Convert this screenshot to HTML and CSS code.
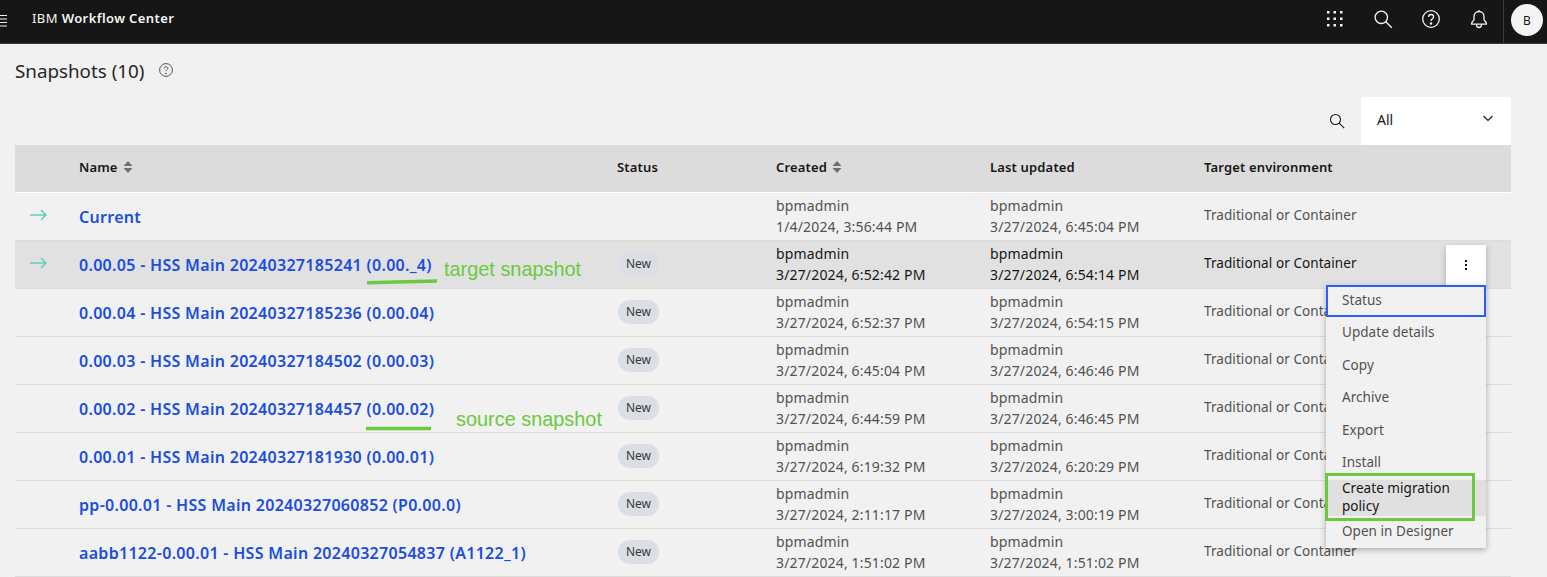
FILE: index.html
```html
<!DOCTYPE html>
<html lang="en">
<head>
<meta charset="utf-8">
<title>IBM Workflow Center</title>
<link rel="stylesheet" href="styles.css">
</head>
<body>
<header class="topbar">
  <svg class="burger" width="8" height="12" viewBox="0 0 8 12"><path d="M0 .5h7M0 4h7M0 7.500h7M0 11h7" stroke="#f4f4f4" fill="none"/></svg>
  <div class="brand">IBM <b>Workflow Center</b></div>
  <div class="top-icons">
    <svg class="ti" width="20" height="20" viewBox="0 0 20 20" fill="#f4f4f4"><rect x="2" y="2" width="2.500" height="2.500"/><rect x="8.500" y="2" width="2.500" height="2.500"/><rect x="15" y="2" width="2.500" height="2.500"/><rect x="2" y="8.500" width="2.500" height="2.500"/><rect x="8.500" y="8.500" width="2.500" height="2.500"/><rect x="15" y="8.500" width="2.500" height="2.500"/><rect x="2" y="15" width="2.500" height="2.500"/><rect x="8.500" y="15" width="2.500" height="2.500"/><rect x="15" y="15" width="2.500" height="2.500"/></svg>
    <svg class="ti" width="20" height="20" viewBox="0 0 20 20" fill="none" stroke="#f4f4f4" stroke-width="1.300"><circle cx="8.300" cy="8.300" r="6.200"/><path d="M12.800 12.800l6 6"/></svg>
    <svg class="ti" width="20" height="20" viewBox="0 0 20 20" fill="none" stroke="#f4f4f4" stroke-width="1.300"><circle cx="10" cy="10" r="8.300"/><path d="M7.500 8c0-1.500 1-2.500 2.500-2.500s2.600 1 2.600 2.300c0 1.200-.8 1.800-1.500 2.300-.7.400-1.100.9-1.100 1.900"/><circle cx="10" cy="14.500" r=".6" fill="#f4f4f4"/></svg>
    <svg class="ti" width="20" height="20" viewBox="0 0 20 20" fill="none" stroke="#f4f4f4" stroke-width="1.300"><path d="M10 2.500c-3 0-5 2.200-5 5v3.300l-2.300 3v1.300h14.600v-1.300l-2.300-3V7.500c0-2.800-2-5-5-5zM10 1v1.500M7.500 15.500c0 1.800 1 3 2.500 3s2.500-1.200 2.500-3"/></svg>
  </div>
  <div class="user"><span class="avatar">B</span></div>
</header>

<main class="page">
  <div class="title-row">
    <h1 class="title">Snapshots (10)</h1>
    <svg class="help" width="16" height="16" viewBox="0 0 16 16" fill="none" stroke="#525252"><circle cx="8" cy="8" r="6.400"/><path d="M6.100 6.500c0-1.100.8-1.800 1.900-1.800s1.900.7 1.900 1.600c0 .9-.6 1.300-1.100 1.700-.5.300-.8.600-.8 1.300"/><circle cx="8" cy="11.300" r=".4" fill="#525252"/></svg>
  </div>

  <div class="toolbar">
    <svg class="tool-search" width="16" height="16" viewBox="0 0 16 16" fill="none" stroke="#161616" stroke-width="1.100"><circle cx="6.500" cy="6.500" r="5"/><path d="M10.200 10.200l5 5"/></svg>
    <div class="select"><span class="select-label">All</span>
      <svg width="10" height="7" viewBox="0 0 10 7" fill="none" stroke="#161616" stroke-width="1.100"><path d="M.5 1l4.500 4.500L9.500 1"/></svg>
    </div>
  </div>

  <div class="table">
    <div class="row head">
      <div></div>
      <div class="th">Name <svg class="sort" width="10" height="14" viewBox="0 0 10 14" fill="#6f6f6f"><path d="M5 1l4.500 5h-9zM5 13L.5 8h9z"/></svg></div>
      <div class="th">Status</div>
      <div class="th">Created <svg class="sort" width="10" height="14" viewBox="0 0 10 14" fill="#6f6f6f"><path d="M5 1l4.500 5h-9zM5 13L.5 8h9z"/></svg></div>
      <div class="th">Last updated</div>
      <div class="th">Target environment</div>
    </div>

    <div class="row">
      <div class="arrow"><svg width="17" height="12" viewBox="0 0 17 12" fill="none" stroke="#5fd0b8" stroke-width="1.500"><path d="M0 6h16M11 1l5 5-5 5"/></svg></div>
      <a class="name">Current</a>
      <div></div>
      <div class="stamp">bpmadmin<br>1/4/2024, 3:56:44 PM</div>
      <div class="stamp">bpmadmin<br>3/27/2024, 6:45:04 PM</div>
      <div class="env">Traditional or Container</div>
    </div>

    <div class="row hover">
      <div class="arrow"><svg width="17" height="12" viewBox="0 0 17 12" fill="none" stroke="#5fd0b8" stroke-width="1.500"><path d="M0 6h16M11 1l5 5-5 5"/></svg></div>
      <a class="name">0.00.05 - HSS Main 20240327185241 (0.00._4)</a>
      <div class="tag-cell"><span class="tag">New</span></div>
      <div class="stamp">bpmadmin<br>3/27/2024, 6:52:42 PM</div>
      <div class="stamp">bpmadmin<br>3/27/2024, 6:54:14 PM</div>
      <div class="env">Traditional or Container</div>
    </div>

    <div class="row">
      <div></div>
      <a class="name">0.00.04 - HSS Main 20240327185236 (0.00.04)</a>
      <div class="tag-cell"><span class="tag">New</span></div>
      <div class="stamp">bpmadmin<br>3/27/2024, 6:52:37 PM</div>
      <div class="stamp">bpmadmin<br>3/27/2024, 6:54:15 PM</div>
      <div class="env">Traditional or Container</div>
    </div>

    <div class="row">
      <div></div>
      <a class="name">0.00.03 - HSS Main 20240327184502 (0.00.03)</a>
      <div class="tag-cell"><span class="tag">New</span></div>
      <div class="stamp">bpmadmin<br>3/27/2024, 6:45:04 PM</div>
      <div class="stamp">bpmadmin<br>3/27/2024, 6:46:46 PM</div>
      <div class="env">Traditional or Container</div>
    </div>

    <div class="row">
      <div></div>
      <a class="name">0.00.02 - HSS Main 20240327184457 (0.00.02)</a>
      <div class="tag-cell"><span class="tag">New</span></div>
      <div class="stamp">bpmadmin<br>3/27/2024, 6:44:59 PM</div>
      <div class="stamp">bpmadmin<br>3/27/2024, 6:46:45 PM</div>
      <div class="env">Traditional or Container</div>
    </div>

    <div class="row">
      <div></div>
      <a class="name">0.00.01 - HSS Main 20240327181930 (0.00.01)</a>
      <div class="tag-cell"><span class="tag">New</span></div>
      <div class="stamp">bpmadmin<br>3/27/2024, 6:19:32 PM</div>
      <div class="stamp">bpmadmin<br>3/27/2024, 6:20:29 PM</div>
      <div class="env">Traditional or Container</div>
    </div>

    <div class="row">
      <div></div>
      <a class="name">pp-0.00.01 - HSS Main 20240327060852 (P0.00.0)</a>
      <div class="tag-cell"><span class="tag">New</span></div>
      <div class="stamp">bpmadmin<br>3/27/2024, 2:11:17 PM</div>
      <div class="stamp">bpmadmin<br>3/27/2024, 3:00:19 PM</div>
      <div class="env">Traditional or Container</div>
    </div>

    <div class="row">
      <div></div>
      <a class="name">aabb1122-0.00.01 - HSS Main 20240327054837 (A1122_1)</a>
      <div class="tag-cell"><span class="tag">New</span></div>
      <div class="stamp">bpmadmin<br>3/27/2024, 1:51:02 PM</div>
      <div class="stamp">bpmadmin<br>3/27/2024, 1:51:02 PM</div>
      <div class="env">Traditional or Container</div>
    </div>
  </div>
</main>

<div class="kebab"><svg width="4" height="12" viewBox="0 0 4 12" fill="#161616"><rect x="1" y="1" width="2" height="2"/><rect x="1" y="5" width="2" height="2"/><rect x="1" y="9" width="2" height="2"/></svg></div>
<ul class="menu">
  <li class="focus">Status</li>
  <li>Update details</li>
  <li>Copy</li>
  <li>Archive</li>
  <li>Export</li>
  <li>Install</li>
  <li class="active">Create migration policy</li>
  <li class="last">Open in Designer</li>
</ul>
<div class="green-box"></div>

<span class="note note-target">target snapshot</span>
<span class="note note-source">source snapshot</span>
<svg class="mark mark-target" width="72" height="7" viewBox="0 0 72 7"><path d="M1 4.700L71 3" stroke="#6cc93f" stroke-width="3.500" fill="none"/></svg>
<svg class="mark mark-source" width="66" height="7" viewBox="0 0 66 7"><path d="M0 3.500H65" stroke="#6cc93f" stroke-width="3.500" fill="none"/></svg>
</body>
</html>
```

FILE: styles.css
```css
* { box-sizing: border-box; }
html, body { margin: 0; height: 577px; overflow: hidden; }
body { background: #f1f1f1; font-family: "Noto Sans", "Liberation Sans", sans-serif; color: #161616; position: relative; }

.topbar { height: 44px; background: #161616; border-bottom: 1px solid #393939; display: flex; align-items: center; color: #f4f4f4; }
.burger { margin-top: -2px; flex: none; }
.brand { margin-left: 24px; font-size: 13px; letter-spacing: .4px; margin-top: -7px; }
.brand b { font-weight: 600; }
.top-icons { margin-left: auto; display: flex; gap: 28px; margin-top: -5px; }
.user { width: 44px; height: 43px; margin-left: 14px; border-left: 1px solid #393939; display: flex; align-items: center; justify-content: center; padding-left: 3px; }
.avatar { width: 32px; height: 32px; border-radius: 50%; background: #f4f4f4; color: #161616; font-size: 12px; display: flex; align-items: center; justify-content: center; margin-top: -3px; }

.page { padding: 0 36px 0 15px; }
.title-row { display: flex; align-items: center; gap: 14px; height: 53px; }
.title { margin: 0; font-size: 18.800px; font-weight: 400; color: #262626; }
.help { margin-top: -2px; }

.toolbar { display: flex; justify-content: flex-end; align-items: center; height: 48px; }
.tool-search { margin-right: 16px; }
.select { width: 150px; height: 48px; background: #fff; display: flex; align-items: center; justify-content: space-between; padding: 0 18px 0 16px; font-size: 14px; }
.select-label { margin-top: -4px; }
.select svg { margin-top: -6px; }

.row { display: grid; grid-template-columns: 64px 538px 159px 214px 214px 1fr; align-items: center; height: 48px; border-bottom: 1px solid #dcdcdc; }
.row.head { height: 48px; background: #dcdcdc; border-bottom: 1px solid #fff; }
.row.hover { background: #e1e1e1; }
.th { font-size: 13px; font-weight: 600; letter-spacing: .16px; display: flex; align-items: center; gap: 5px; color: #161616; margin-top: -4px; }
.sort { flex: none; }
.arrow { padding-left: 15px; display: flex; margin-top: -3px; }
.name { font-size: 16px; font-weight: 600; letter-spacing: .3px; color: #1a4de0; white-space: nowrap; }
.stamp { font-size: 14px; line-height: 21px; letter-spacing: .16px; color: #525252; white-space: nowrap; margin-top: -2px; }
.hover .stamp, .hover .env { color: #161616; }
.env { font-size: 13.500px; letter-spacing: .08px; color: #525252; white-space: nowrap; margin-top: -3px; }
.tag-cell { display: flex; padding-left: 1px; margin-top: -2px; }
.tag { display: flex; align-items: center; justify-content: center; width: 41px; height: 24px; border-radius: 12px; background: #dadee5; color: #393939; font-size: 12px; }

.kebab { position: absolute; left: 1446px; top: 245px; width: 40px; height: 40px; background: #fff; display: flex; align-items: center; justify-content: center; box-shadow: 0 2px 6px rgba(0,0,0,.25); }
.menu { position: absolute; left: 1326px; top: 285px; width: 160px; height: 263px; margin: 0; padding: 0; list-style: none; background: #f1f1f1; box-shadow: 0 2px 6px rgba(0,0,0,.3); font-size: 13.500px; letter-spacing: .05px; color: #525252; }
.menu li { padding: 0 16px 2px; height: 32.500px; display: flex; align-items: center; }
.menu li.focus { height: 32px; outline: 2px solid #2d5ff5; outline-offset: -2px; }
.menu li.active { height: 36px; background: #e0e0e0; color: #161616; line-height: 18px; }
.menu li.last { height: 32px; }
.green-box { position: absolute; left: 1325px; top: 473px; width: 150px; height: 48px; border: 3.500px solid #6cc93f; }

.note { position: absolute; font-family: "Liberation Sans", sans-serif; font-size: 19.900px; color: #6cc93f; white-space: nowrap; }
.note-target { left: 444px; top: 258px; }
.note-source { left: 456px; top: 408px; }
.mark { position: absolute; }
.mark-target { left: 366px; top: 278px; }
.mark-source { left: 366px; top: 425px; }
```
